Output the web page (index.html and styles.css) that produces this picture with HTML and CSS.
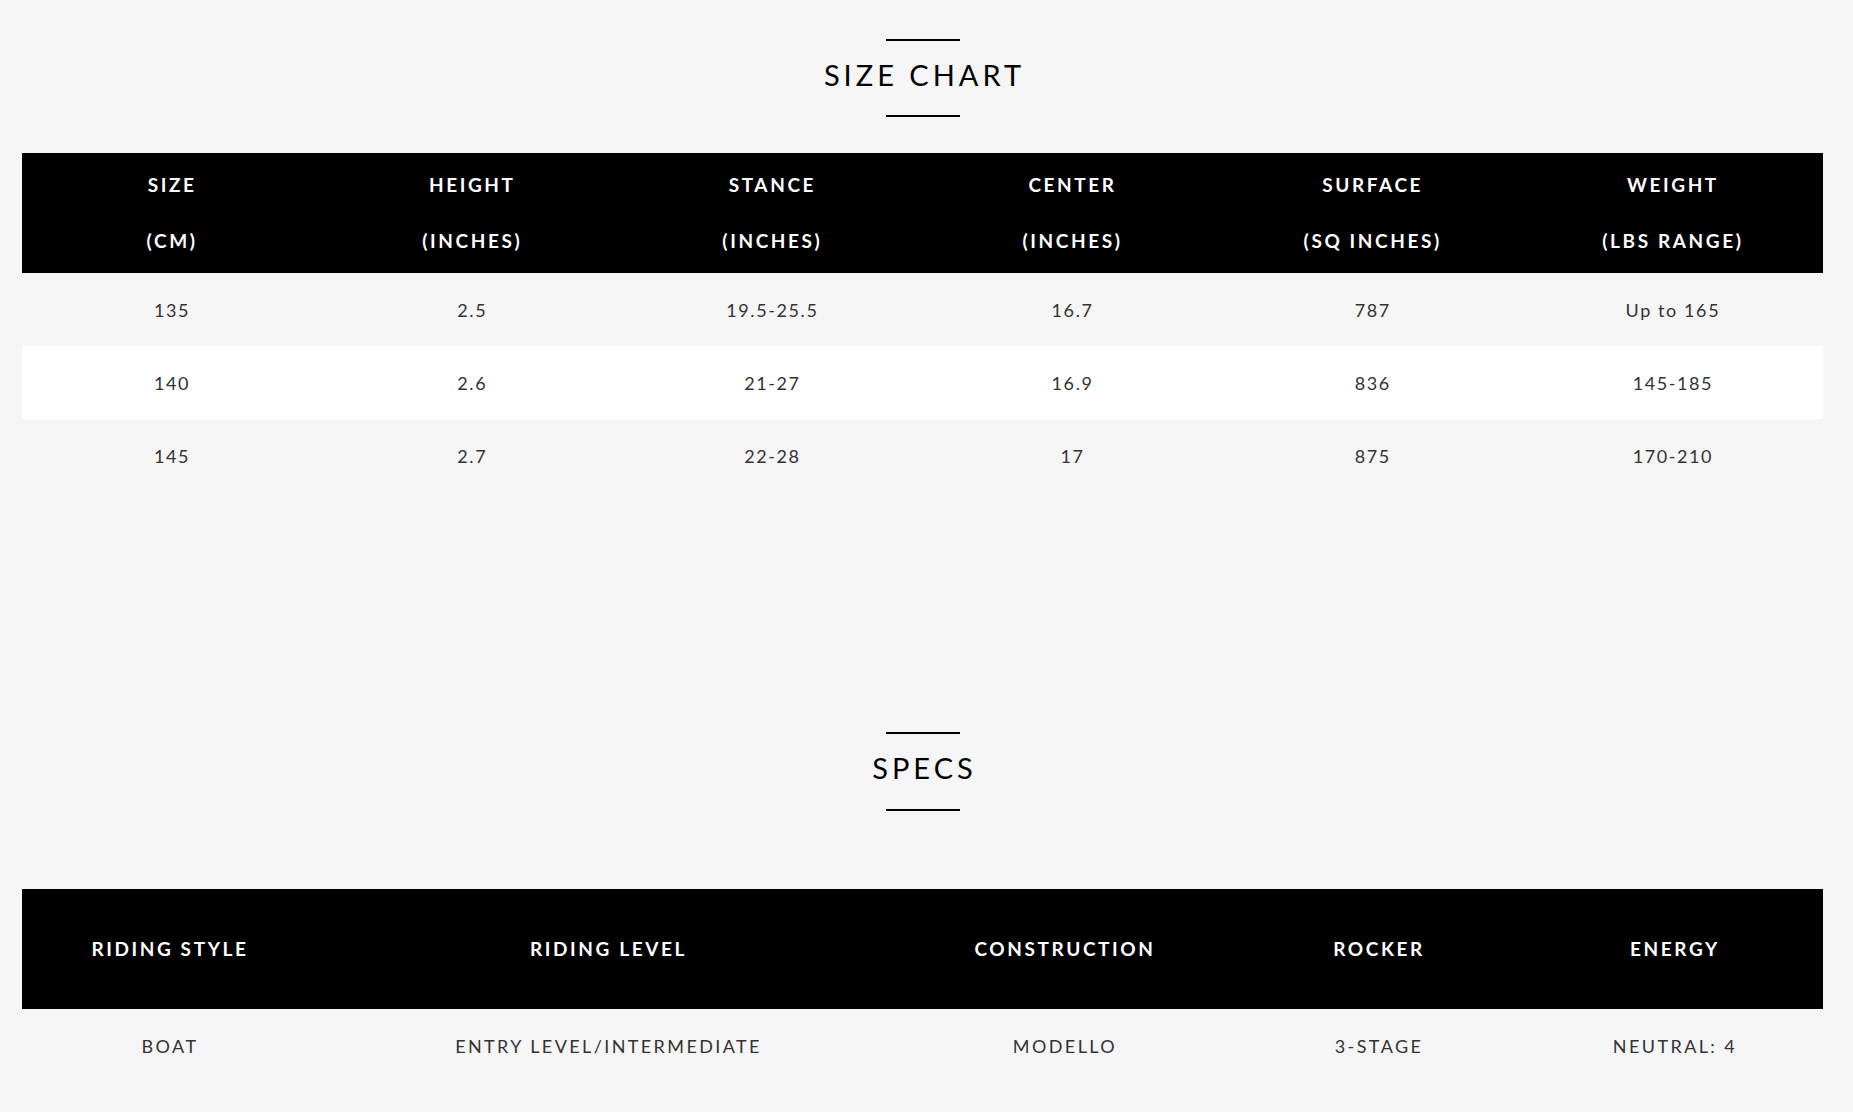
FILE: index.html
```html
<!DOCTYPE html>
<html lang="en">
<head>
<meta charset="utf-8">
<title>Size Chart &amp; Specs</title>
<link rel="stylesheet" href="styles.css">
</head>
<body>
<main class="page">
  <section class="section section-size">
    <header class="heading">
      <span class="rule"></span>
      <h2 class="title">SIZE CHART</h2>
      <span class="rule"></span>
    </header>
    <table class="chart chart-size">
      <thead>
        <tr>
          <th><span class="th-line">SIZE</span><span class="th-line">(CM)</span></th>
          <th><span class="th-line">HEIGHT</span><span class="th-line">(INCHES)</span></th>
          <th><span class="th-line">STANCE</span><span class="th-line">(INCHES)</span></th>
          <th><span class="th-line">CENTER</span><span class="th-line">(INCHES)</span></th>
          <th><span class="th-line">SURFACE</span><span class="th-line">(SQ INCHES)</span></th>
          <th><span class="th-line">WEIGHT</span><span class="th-line">(LBS RANGE)</span></th>
        </tr>
      </thead>
      <tbody>
        <tr><td>135</td><td>2.5</td><td>19.5-25.5</td><td>16.7</td><td>787</td><td>Up to 165</td></tr>
        <tr><td>140</td><td>2.6</td><td>21-27</td><td>16.9</td><td>836</td><td>145-185</td></tr>
        <tr><td>145</td><td>2.7</td><td>22-28</td><td>17</td><td>875</td><td>170-210</td></tr>
      </tbody>
    </table>
  </section>

  <section class="section section-specs">
    <header class="heading">
      <span class="rule"></span>
      <h2 class="title title-specs">SPECS</h2>
      <span class="rule"></span>
    </header>
    <table class="chart chart-specs">
      <colgroup>
        <col class="c-style">
        <col class="c-level">
        <col class="c-construction">
        <col class="c-rocker">
        <col class="c-energy">
      </colgroup>
      <thead>
        <tr>
          <th>RIDING STYLE</th>
          <th>RIDING LEVEL</th>
          <th>CONSTRUCTION</th>
          <th>ROCKER</th>
          <th>ENERGY</th>
        </tr>
      </thead>
      <tbody>
        <tr><td>BOAT</td><td>ENTRY LEVEL/INTERMEDIATE</td><td>MODELLO</td><td>3-STAGE</td><td>NEUTRAL: 4</td></tr>
      </tbody>
    </table>
  </section>
</main>
</body>
</html>
```

FILE: styles.css
```css
* { box-sizing: border-box; }

html, body {
  margin: 0;
  padding: 0;
  background: #f5f5f5;
}

body {
  font-family: "Lato", "Open Sans", sans-serif;
  color: #222;
}

.page {
  padding: 0 30px 0 22px;
}

.section-size {
  padding-top: 39px;
}

.section-specs {
  padding-top: 240px;
}

.heading {
  display: flex;
  flex-direction: column;
  align-items: center;
}

.rule {
  display: block;
  width: 74px;
  height: 2px;
  background: #000;
}

.title {
  margin: 16px 0 22px;
  font-size: 29px;
  line-height: 36px;
  font-weight: 400;
  letter-spacing: 4px;
  text-indent: 4px;
  color: #000;
}

.title-specs {
  margin-bottom: 23px;
}

.chart {
  width: 100%;
  border-collapse: collapse;
  table-layout: fixed;
}

.chart-size {
  margin-top: 36px;
}

.chart-specs {
  margin-top: 78px;
}

.chart th {
  background: #000;
  color: #fff;
  font-weight: 700;
  font-size: 19px;
  letter-spacing: 2.6px;
  text-align: center;
  padding: 0;
}

.chart-size th {
  height: 120px;
  padding: 18px 0;
}

.th-line {
  display: block;
  line-height: 28px;
}

.th-line + .th-line {
  margin-top: 28px;
}

.chart-specs th {
  height: 120px;
  line-height: 28px;
}

.chart td {
  height: 73px;
  padding: 0;
  text-align: center;
  vertical-align: middle;
  font-size: 18px;
  font-weight: 400;
  letter-spacing: 1.6px;
  color: #333;
}

.chart-specs td {
  letter-spacing: 2.4px;
}

.chart-size tbody tr:nth-child(even) td {
  background: #fff;
}

.c-style { width: 296px; }
.c-level { width: 581px; }
.c-construction { width: 332px; }
.c-rocker { width: 296px; }
.c-energy { width: 296px; }
```
